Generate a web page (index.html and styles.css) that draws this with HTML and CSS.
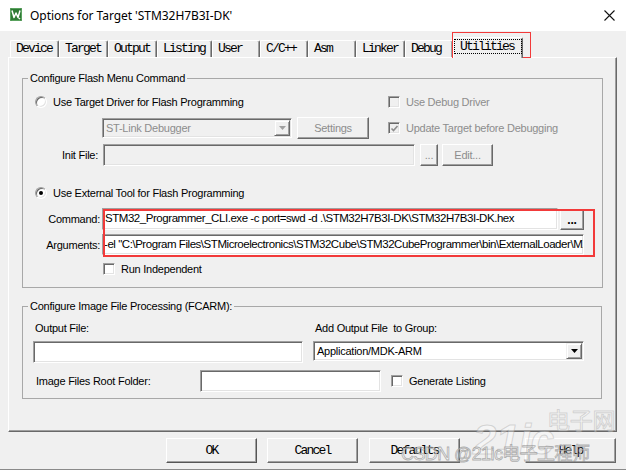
FILE: index.html
```html
<!DOCTYPE html>
<html>
<head>
<meta charset="utf-8">
<link rel="stylesheet" href="styles.css">
</head>
<body>
<div class="window">
  <header class="titlebar">
    <svg class="appicon" width="12" height="13" viewBox="0 0 12 13">
      <rect x="0" y="0" width="12" height="13" rx="1" fill="#2e7a34"/>
      <rect x="0.5" y="0.5" width="11" height="12" rx="1" fill="none" stroke="#5aa35f" stroke-width="1"/>
      <path d="M2 2.5 L4 9.5 L6 5 L8 9.5 L10 2.5" fill="none" stroke="#fff" stroke-width="1.5" stroke-linejoin="round"/>
      <path d="M8.3 10.5 h2 M9.5 9.8 v1.6" stroke="#fff" stroke-width="0.8"/>
    </svg>
    <span class="title">Options for Target 'STM32H7B3I-DK'</span>
    <svg class="close" width="11" height="11" viewBox="0 0 11 11">
      <path d="M0.5 0.5 L10.5 10.5 M10.5 0.5 L0.5 10.5" stroke="#111" stroke-width="1.1"/>
    </svg>
  </header>

  <nav class="tabs">
    <div class="tab">Device</div>
    <div class="tab">Target</div>
    <div class="tab">Output</div>
    <div class="tab">Listing</div>
    <div class="tab">User</div>
    <div class="tab">C/C++</div>
    <div class="tab">Asm</div>
    <div class="tab">Linker</div>
    <div class="tab">Debug</div>
    <div class="tab active"><span class="focus">Utilities</span></div>
  </nav>

  <section class="panel">
    <fieldset class="group g1">
      <legend>Configure Flash Menu Command</legend>

      <div class="row ra">
        <label class="opt main"><span class="radio"></span><span>Use Target Driver for Flash Programming</span></label>
        <label class="opt dis"><span class="check off"></span><span>Use Debug Driver</span></label>
      </div>

      <div class="row rb">
        <div class="combo disabled w-driver">
          <span class="combo-text">ST-Link Debugger</span>
          <span class="drop"><svg width="7" height="4" viewBox="0 0 7 4"><path d="M0 0 H7 L3.5 4 Z" fill="#a0a0a0"/></svg></span>
        </div>
        <button class="btn dis w-settings">Settings</button>
        <label class="opt dis side"><span class="check off"><svg width="9" height="9" viewBox="0 0 9 9"><path d="M1.5 4.5 L3.5 6.5 L7.5 2" fill="none" stroke="#8d8d8d" stroke-width="1.6"/></svg></span><span>Update Target before Debugging</span></label>
      </div>

      <div class="row rc">
        <span class="lbl w-init">Init File:</span>
        <span class="field disabled w-initfile"></span>
        <button class="btn dis w-dots">...</button>
        <button class="btn dis w-edit">Edit...</button>
      </div>

      <div class="row rd">
        <label class="opt main"><span class="radio on"></span><span>Use External Tool for Flash Programming</span></label>
      </div>

      <div class="row re">
        <span class="lbl w-cmd">Command:</span>
        <span class="field cmd w-command">STM32_Programmer_CLI.exe -c port=swd -d .\STM32H7B3I-DK\STM32H7B3I-DK.hex</span>
        <button class="btn bold w-browse">...</button>
      </div>

      <div class="row rf">
        <span class="lbl w-cmd">Arguments:</span>
        <span class="field cmd w-args">-el "C:\Program Files\STMicroelectronics\STM32Cube\STM32CubeProgrammer\bin\ExternalLoader\MX25LM51245G_STM32H7B3I-DISCO.stldr"</span>
      </div>

      <div class="row rg">
        <label class="opt indep"><span class="check"></span><span>Run Independent</span></label>
      </div>
    </fieldset>

    <fieldset class="group g2">
      <legend>Configure Image File Processing (FCARM):</legend>

      <div class="row rl">
        <span class="lbl w-outlbl">Output File:</span>
        <span class="lbl">Add Output File&nbsp; to Group:</span>
      </div>

      <div class="row ri">
        <span class="field w-outfile"></span>
        <div class="combo w-group">
          <span class="combo-text">Application/MDK-ARM</span>
          <span class="drop"><svg width="7" height="4" viewBox="0 0 7 4"><path d="M0 0 H7 L3.5 4 Z" fill="#000"/></svg></span>
        </div>
      </div>

      <div class="row rr">
        <span class="lbl w-root">Image Files Root Folder:</span>
        <span class="field w-rootfile"></span>
        <label class="opt genlist"><span class="check"></span><span>Generate Listing</span></label>
      </div>
    </fieldset>
  </section>

  <footer class="buttons">
    <button class="btn big ok">OK</button>
    <button class="btn big">Cancel</button>
    <button class="btn big defaults">Defaults</button>
    <button class="btn big help">Help</button>
  </footer>

  <div class="mark mark-tab"></div>
  <div class="mark mark-cmd"></div>

  <div class="watermark">
    <span class="wm-logo">21ic</span><span class="wm-cn">电子网</span>
    <span class="wm-text">CSDN @21ic电子工程师</span>
  </div>
</div>
</body>
</html>
```

FILE: styles.css
```css
* { box-sizing: border-box; }

body {
  margin: 0;
  background: #fff;
  font-family: "Liberation Sans", Arial, sans-serif;
  font-size: 11px;
  letter-spacing: -0.25px;
  color: #000;
}

.window {
  position: relative;
  width: 626px;
  height: 470px;
  background: #f0f0f0;
  overflow: hidden;
  border-bottom: 1px solid #8a8a8a;
}

/* title bar */
.titlebar {
  height: 31px;
  background: #fff;
  display: flex;
  align-items: center;
  padding-left: 10px;
}
.appicon { margin-right: 8px; margin-top: -2px; }
.title {
  font-family: "Noto Sans", "Liberation Sans", sans-serif;
  font-size: 12px;
  letter-spacing: -0.05px;
  color: #000;
}
.close { margin-left: auto; margin-right: 11px; }

/* tabs */
.tabs {
  height: 26px;
  display: flex;
  align-items: flex-end;
  padding-left: 10px;
}
.tab {
  height: 17px;
  min-width: 48px;
  padding: 0 6px 0 5px;
  font-family: "Liberation Mono", "Courier New", monospace;
  font-size: 13px;
  letter-spacing: -1.8px;
  line-height: 16px;
  border-top: 1px solid #fff;
  border-left: 1px solid #fff;
  border-right: 1px solid #696969;
  box-shadow: inset -1px 0 #a0a0a0;
  border-radius: 2px 2px 0 0;
  white-space: nowrap;
}
.tab.active {
  position: relative;
  z-index: 2;
  height: 21px;
  margin-bottom: -1px;
  padding: 2px 1px 0 1px;
  background: #f0f0f0;
}
.focus {
  display: block;
  outline: 1px dotted #000;
  padding: 0 7px 0 5px;
  line-height: 13px;
  height: 13px;
}

/* main panel */
.panel {
  margin-left: 8px;
  width: 609px;
  height: 375px;
  border: 1px solid;
  border-color: #fff #696969 #696969 #fff;
  box-shadow: inset -1px -1px #a0a0a0;
  padding: 13px 0 0 13px;
}

.group {
  margin: 0;
  width: 581px;
  border: 1px solid #a8a8a8;
  padding: 0;
  min-width: 0;
}
.group legend {
  margin-left: 5px;
  padding: 0 2px;
  line-height: 14px;
  height: 14px;
}
.g1 { padding-bottom: 10px; }
.g2 { margin-top: 11px; padding-bottom: 6px; width: 580px; }

.row {
  display: flex;
  align-items: center;
}
.ra { margin-top: 9px; height: 16px; }
.rb { margin-top: 7px; height: 22px; }
.rc { margin-top: 5px; height: 22px; }
.rd { margin-top: 19px; height: 16px; }
.re { margin-top: 7px; height: 22px; }
.rf { margin-top: 4px; height: 21px; }
.rg { margin-top: 6px; height: 16px; }
.rl { margin-top: 8px; height: 14px; }
.ri { margin-top: 6px; height: 22px; }
.rr { margin-top: 7px; height: 22px; }

/* options */
.opt {
  display: flex;
  align-items: center;
  gap: 6px;
  white-space: nowrap;
}
.main { margin-left: 12px; width: 353px; }
.dis { color: #8d8d8d; }
.side { margin-left: 19px; }
.indep { margin-left: 80px; }
.genlist { margin-left: 10px; }

.radio {
  width: 12px;
  height: 12px;
  border-radius: 50%;
  background: #fff;
  border: 1px solid;
  border-color: #a0a0a0 #fff #fff #a0a0a0;
  box-shadow: inset 1px 1px #696969, inset -1px -1px #e3e3e3;
  display: flex;
  align-items: center;
  justify-content: center;
}
.radio.on::after {
  content: "";
  width: 4px;
  height: 4px;
  border-radius: 50%;
  background: #000;
}

.check {
  width: 12px;
  height: 12px;
  background: #fff;
  border: 1px solid;
  border-color: #a0a0a0 #fff #fff #a0a0a0;
  box-shadow: inset 1px 1px #696969, inset -1px -1px #e3e3e3;
  display: flex;
  align-items: center;
  justify-content: center;
}
.check.off { background: #f0f0f0; }

/* labels */
.lbl { white-space: nowrap; }
.w-init { width: 75px; text-align: right; }
.w-cmd { width: 77px; text-align: right; }
.w-outlbl { margin-left: 12px; width: 280px; }
.w-root { margin-left: 13px; width: 164px; }

/* fields */
.field {
  display: block;
  height: 22px;
  background: #fff;
  border: 1px solid;
  border-color: #a0a0a0 #fff #fff #a0a0a0;
  box-shadow: inset 1px 1px #696969, inset -1px -1px #e3e3e3;
  overflow: hidden;
  white-space: nowrap;
}
.field.disabled { background: #f0f0f0; }
.field.cmd {
  font-size: 11.5px;
  letter-spacing: -0.45px;
  line-height: 19px;
  padding-left: 2px;
}
.w-initfile { margin-left: 5px; width: 312px; }
.w-command { margin-left: 2px; width: 456px; }
.w-args { margin-left: 2px; width: 482px; height: 21px; line-height: 18px !important; padding-left: 1px !important; }
.w-outfile { margin-left: 10px; width: 270px; }
.w-rootfile { width: 181px; }

/* combo */
.combo {
  display: flex;
  align-items: center;
  height: 20px;
  background: #fff;
  border: 1px solid;
  border-color: #a0a0a0 #fff #fff #a0a0a0;
  box-shadow: inset 1px 1px #696969, inset -1px -1px #e3e3e3;
  padding: 2px 1px 2px 2px;
}
.combo.disabled { background: #f0f0f0; color: #8d8d8d; }
.combo-text { flex: 1; padding-left: 1px; line-height: 14px; }
.drop {
  width: 16px;
  height: 16px;
  background: #f0f0f0;
  border: 1px solid;
  border-color: #f0f0f0 #696969 #696969 #f0f0f0;
  box-shadow: inset 1px 1px #fff, inset -1px -1px #a0a0a0;
  display: flex;
  align-items: center;
  justify-content: center;
}
.w-driver { margin-left: 79px; width: 190px; }
.w-group { margin-left: 10px; width: 271px; margin-top: -2px; }

/* buttons */
.btn {
  height: 22px;
  margin: 0;
  padding: 0;
  background: #f0f0f0;
  border: 1px solid;
  border-color: #fff #696969 #696969 #fff;
  box-shadow: inset -1px -1px #a0a0a0;
  font-family: "Liberation Sans", Arial, sans-serif;
  font-size: 11px;
  letter-spacing: -0.25px;
  color: #000;
}
.btn.dis { color: #8d8d8d; }
.w-settings { margin-left: 5px; width: 72px; }
.w-dots { margin-left: 5px; width: 18px; }
.w-edit { margin-left: 4px; width: 51px; }
.w-browse { margin-left: 2px; width: 24px; height: 21px; margin-top: 1px; }
.bold { font-weight: bold; font-size: 12px; line-height: 12px; }

.buttons {
  display: flex;
  margin-top: 6px;
  padding-left: 166px;
  padding-right: 10px;
}
.btn.big {
  width: 91px;
  height: 25px;
  font-family: "Liberation Mono", "Courier New", monospace;
  font-size: 13px;
  letter-spacing: -1.8px;
  margin-left: 10px;
}
.btn.ok { margin-left: 0; border-color: #fff #555 #555 #fff; }
.btn.defaults { margin-left: 11px; }
.btn.help { margin-left: auto; }

/* red annotation marks */
.mark {
  position: absolute;
  border: 1.5px solid #f23a3a;
  pointer-events: none;
}
.mark-tab { left: 452px; top: 32px; width: 79px; height: 26px; }
.mark-cmd { left: 103px; top: 209px; width: 492px; height: 48px; border-width: 2px; }

/* watermark */
.watermark {
  position: absolute;
  left: 395px;
  top: 400px;
  width: 231px;
  height: 70px;
  pointer-events: none;
}
.wm-logo {
  position: absolute;
  left: 78px;
  top: 16px;
  font-family: "Liberation Sans", sans-serif;
  font-weight: bold;
  font-style: italic;
  font-size: 42px;
  color: rgba(255, 255, 255, 0.35);
  -webkit-text-stroke: 1px rgba(150, 150, 150, 0.35);
}
.wm-cn {
  position: absolute;
  left: 152px;
  top: 2px;
  font-family: "Noto Sans CJK SC", sans-serif;
  font-size: 23px;
  color: rgba(255, 255, 255, 0.35);
  -webkit-text-stroke: 1px rgba(150, 150, 150, 0.35);
}
.wm-text {
  position: absolute;
  left: 6px;
  top: 39px;
  font-family: "Liberation Sans", "Noto Sans CJK SC", sans-serif;
  font-size: 18px;
  letter-spacing: -0.6px;
  white-space: nowrap;
  color: rgba(255, 255, 255, 0.55);
  -webkit-text-stroke: 0.8px rgba(110, 110, 110, 0.55);
}
```
